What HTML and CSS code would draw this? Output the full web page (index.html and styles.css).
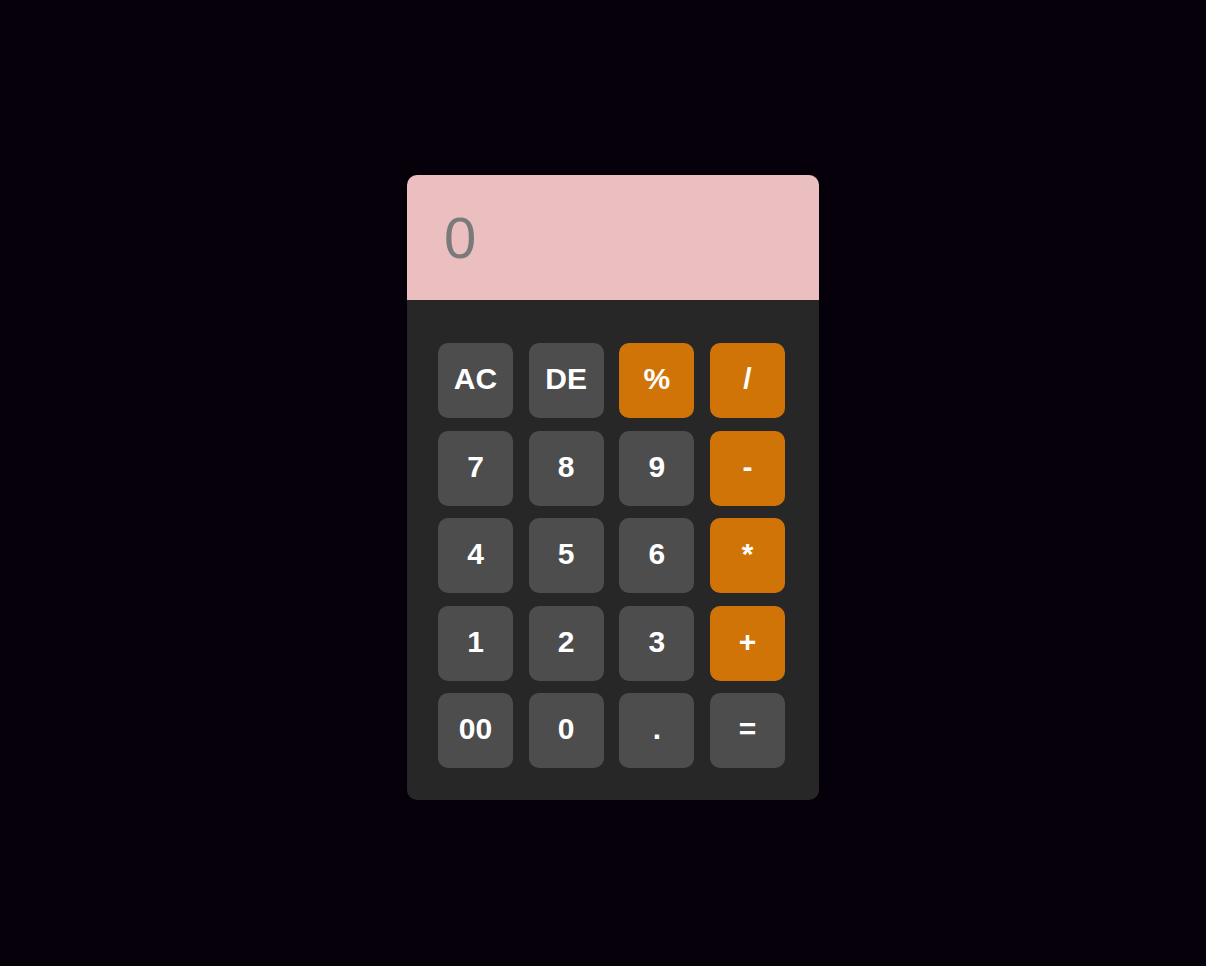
FILE: index.html
```html
<!DOCTYPE html>
<html>
<head>
<meta charset="utf-8">
<link rel="stylesheet" href="styles.css">
</head>
<body>
<div class="calc">
  <div class="display">0</div>
  <div class="keys">
    <button class="key">AC</button>
    <button class="key">DE</button>
    <button class="key op">%</button>
    <button class="key op">/</button>
    <button class="key">7</button>
    <button class="key">8</button>
    <button class="key">9</button>
    <button class="key op">-</button>
    <button class="key">4</button>
    <button class="key">5</button>
    <button class="key">6</button>
    <button class="key op">*</button>
    <button class="key">1</button>
    <button class="key">2</button>
    <button class="key">3</button>
    <button class="key op">+</button>
    <button class="key">00</button>
    <button class="key">0</button>
    <button class="key">.</button>
    <button class="key">=</button>
  </div>
</div>
</body>
</html>
```
FILE: styles.css
```css
* { box-sizing: border-box; }
html, body { margin: 0; }
body {
  background: #050009;
  min-height: 100vh;
  display: flex;
  justify-content: center;
  align-items: center;
  padding: 9px 0 0 20px;
  font-family: "Liberation Sans", Arial, sans-serif;
}
.calc {
  width: 412px;
  background: #272727;
  border-radius: 10px;
  overflow: hidden;
}
.display {
  height: 125px;
  background: #ebbfbf;
  color: #7a7a7a;
  font-size: 58px;
  padding: 34px 0 0 37px;
  line-height: 1;
}
.keys {
  display: grid;
  grid-template-columns: repeat(4, 75px);
  grid-auto-rows: 75px;
  column-gap: 15.67px;
  row-gap: 12.5px;
  padding: 43px 34px 32px 31px;
}
.key {
  border: none;
  border-radius: 10px;
  background: #4d4d4d;
  color: #fff;
  font-family: "Liberation Sans", Arial, sans-serif;
  font-weight: bold;
  font-size: 30px;
  padding: 0 0 3px;
}
.key.op { background: #d07408; }
```
